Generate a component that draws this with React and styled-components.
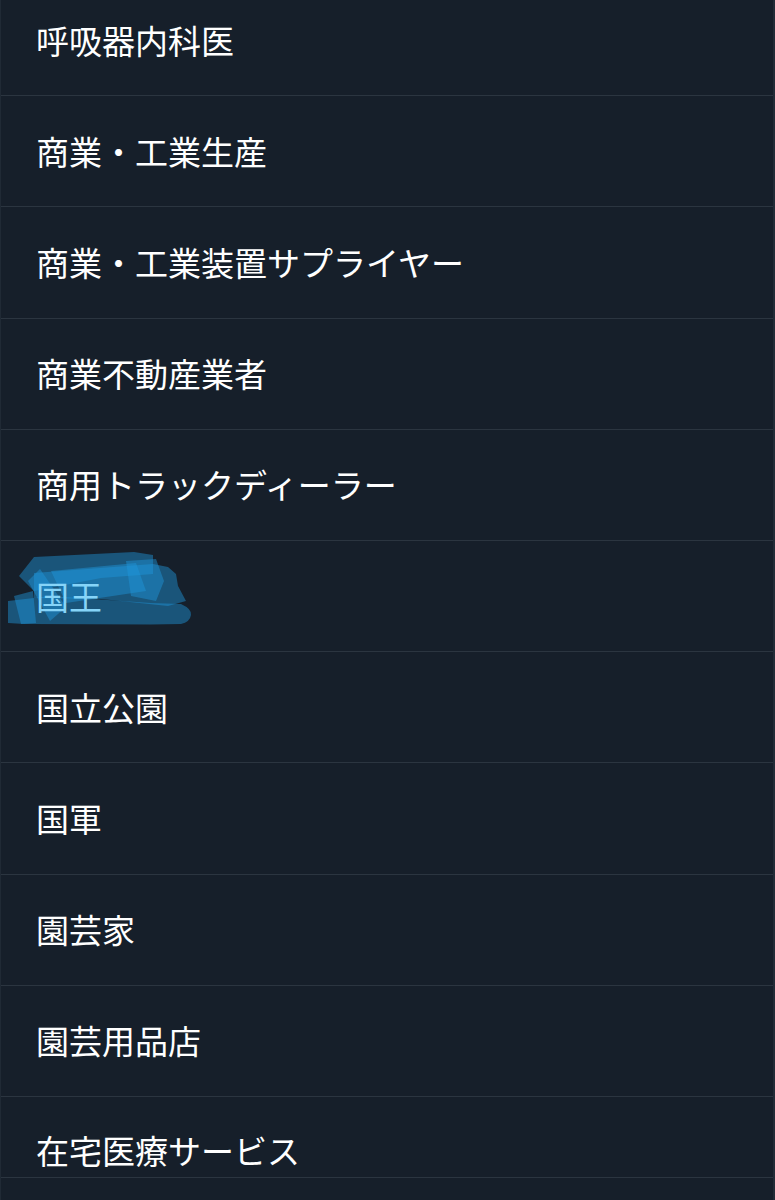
import React from "react";
import styled, { createGlobalStyle } from "styled-components";

const Global = createGlobalStyle`
  html, body {
    margin: 0;
    padding: 0;
    background: #161f2a;
  }
  body {
    font-family: "Noto Sans CJK JP", "Noto Sans", sans-serif;
    overflow: hidden;
  }
`;

const Screen = styled.div`
  height: 1200px;
  overflow: hidden;
  background: #161f2a;
  border-left: 1px solid #202a35;
  border-right: 2px solid #222c37;
  box-sizing: border-box;
`;

const List = styled.ul`
  list-style: none;
  margin: -15px 0 0;
  padding: 0;
`;

const Row = styled.li`
  position: relative;
  display: flex;
  align-items: ${(p) => (p.$cut ? "flex-start" : "center")};
  height: ${(p) => (p.$cut ? "81px" : "110.2px")};
  padding: ${(p) => (p.$cut ? "37px 0 0 35px" : "0 0 0 35px")};
  box-sizing: ${(p) => (p.$cut ? "border-box" : "content-box")};
  border-bottom: 1px solid #2b3540;
`;

const Label = styled.span`
  position: relative;
  z-index: 1;
  font-size: 33px;
  line-height: 1;
  letter-spacing: 0;
  color: ${(p) => (p.$selected ? "#86d4f8" : "#ffffff")};
`;

const Scribble = styled.svg`
  position: absolute;
  left: 5px;
  top: 10px;
  width: 190px;
  height: 76px;
  z-index: 0;
`;

const Highlight = () => (
  <Scribble viewBox="0 0 190 76">
    <g fill="rgb(30,150,220)" fillOpacity="0.45">
      <path d="M13 25 L28 6 L128 1 L147 4 L147 23 L95 27 L28 40 Z" />
      <path d="M28 22 L147 13 L162 16 L170 23 L172 35 L180 50 L162 55 L95 48 L28 47 Z" />
      <path d="M2 50 L45 45 L145 52 L175 53 Q186 58 185 64 Q184 71 175 73 L145 73.5 L18 73 L2 72 Z" />
      <path d="M8 45 L27 40 L30 72 L15 73 Z" />
      <path d="M22 30 L34 18 L60 56 L44 70 Z" />
      <path d="M45 20 L130 12 L140 40 L60 52 Z" />
      <path d="M120 10 L150 8 L158 30 L150 50 L125 45 Z" />
    </g>
  </Scribble>
);

const items = [
  { label: "呼吸器内科医" },
  { label: "商業・工業生産" },
  { label: "商業・工業装置サプライヤー" },
  { label: "商業不動産業者" },
  { label: "商用トラックディーラー" },
  { label: "国王", selected: true },
  { label: "国立公園" },
  { label: "国軍" },
  { label: "園芸家" },
  { label: "園芸用品店" },
  { label: "在宅医療サービス", cut: true },
];

export default function App() {
  return (
    <>
      <Global />
      <Screen>
        <List>
          {items.map((it) => (
            <Row key={it.label} $cut={it.cut}>
              {it.selected && <Highlight />}
              <Label $selected={it.selected}>{it.label}</Label>
            </Row>
          ))}
        </List>
      </Screen>
    </>
  );
}
